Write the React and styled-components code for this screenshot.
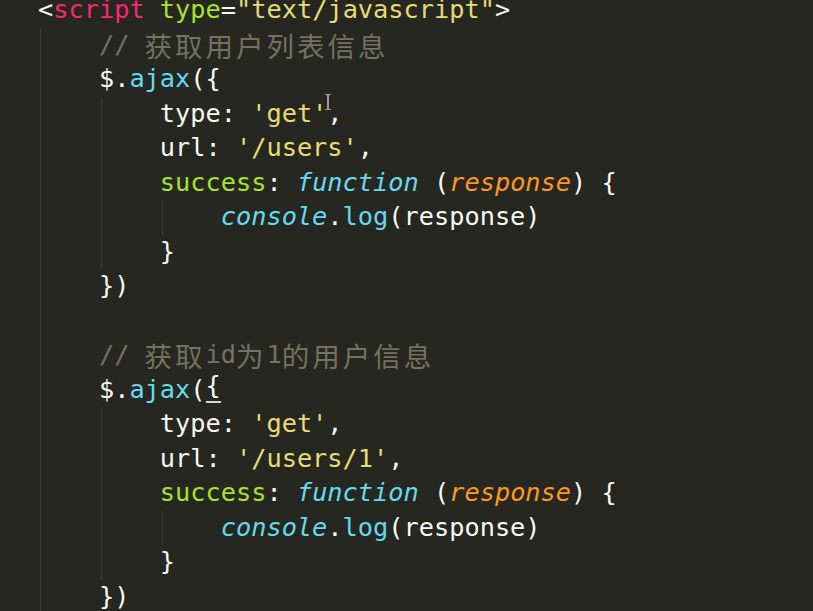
import React from "react";
import styled, { createGlobalStyle } from "styled-components";

const GlobalStyle = createGlobalStyle`
  html, body {
    margin: 0;
    padding: 0;
    background: #262721;
    overflow: hidden;
  }
`;

const Editor = styled.div`
  position: relative;
  width: 813px;
  height: 611px;
  overflow: hidden;
  background: #262721;
  font-family: "DejaVu Sans Mono", "Noto Sans CJK SC", monospace;
  font-size: 25.3px;
  color: #f8f8f2;
`;

const Code = styled.div`
  padding-left: 38px;
  margin-top: -7px;
`;

const Line = styled.div`
  display: flex;
  height: 34.5px;
  line-height: 34.5px;
  white-space: pre;
`;

const Guide = styled.span`
  display: inline-block;
  width: 4ch;
  height: 100%;
  box-sizing: border-box;
  border-left: ${(p) => (p.$on ? "1px solid #3b3c35" : "none")};
  margin-left: ${(p) => (p.$on ? "2px" : "0")};
  margin-right: ${(p) => (p.$on ? "-2px" : "0")};
`;

const Tok = styled.span`
  color: ${(p) => p.$c || "#f8f8f2"};
  font-style: ${(p) => (p.$i ? "italic" : "normal")};
`;

const Cjk = styled.span`
  font-family: "Noto Sans CJK SC", sans-serif;
  font-size: 27.5px;
  letter-spacing: 3px;
  color: #75715e;
`;

const Match = styled.span`
  border-bottom: 2px solid #d8d8d0;
  line-height: 26px;
  display: inline-block;
  height: 28px;
`;

const Cursor = styled.div`
  position: absolute;
  left: 325px;
  top: 94px;
  width: 6px;
  height: 16px;
  &::before {
    content: "";
    position: absolute;
    left: 2px;
    top: 1px;
    width: 1.5px;
    height: 14px;
    background: #9a9a94;
  }
  &::after {
    content: "";
    position: absolute;
    left: 0;
    top: 0;
    width: 6px;
    height: 16px;
    border-top: 1.5px solid #9a9a94;
    border-bottom: 1.5px solid #9a9a94;
    box-sizing: border-box;
  }
`;

const C = {
  pink: "#f92672",
  green: "#a6e22e",
  yellow: "#e6db74",
  cyan: "#66d9ef",
  orange: "#fd971f",
  comment: "#75715e",
};

function Indent({ levels }) {
  return Array.from({ length: levels }, (_, i) => <Guide key={i} $on />);
}

function Ajax({ url, matchBrace }) {
  return (
    <>
      <Line>
        <Indent levels={1} />
        <Tok>$.</Tok>
        <Tok $c={C.cyan}>ajax</Tok>
        <Tok>(</Tok>
        {matchBrace ? <Match>{"{"}</Match> : <Tok>{"{"}</Tok>}
      </Line>
      <Line>
        <Indent levels={2} />
        <Tok>type: </Tok>
        <Tok $c={C.yellow}>'get'</Tok>
        <Tok>,</Tok>
      </Line>
      <Line>
        <Indent levels={2} />
        <Tok>url: </Tok>
        <Tok $c={C.yellow}>'{url}'</Tok>
        <Tok>,</Tok>
      </Line>
      <Line>
        <Indent levels={2} />
        <Tok $c={C.green}>success</Tok>
        <Tok>: </Tok>
        <Tok $c={C.cyan} $i>
          function
        </Tok>
        <Tok> (</Tok>
        <Tok $c={C.orange} $i>
          response
        </Tok>
        <Tok>) {"{"}</Tok>
      </Line>
      <Line>
        <Indent levels={3} />
        <Tok $c={C.cyan} $i>
          console
        </Tok>
        <Tok>.</Tok>
        <Tok $c={C.cyan}>log</Tok>
        <Tok>(response)</Tok>
      </Line>
      <Line>
        <Indent levels={2} />
        <Tok>{"}"}</Tok>
      </Line>
      <Line>
        <Indent levels={1} />
        <Tok>{"})"}</Tok>
      </Line>
    </>
  );
}

export default function App() {
  return (
    <>
      <GlobalStyle />
      <Editor>
        <Code>
          <Line>
            <Tok>&lt;</Tok>
            <Tok $c={C.pink}>script</Tok>
            <Tok> </Tok>
            <Tok $c={C.green}>type</Tok>
            <Tok>=</Tok>
            <Tok $c={C.yellow}>"text/javascript"</Tok>
            <Tok>&gt;</Tok>
          </Line>
          <Line>
            <Indent levels={1} />
            <Tok $c={C.comment}>// </Tok>
            <Cjk>获取用户列表信息</Cjk>
          </Line>
          <Ajax url="/users" />
          <Line>
            <Indent levels={1} />
          </Line>
          <Line>
            <Indent levels={1} />
            <Tok $c={C.comment}>// </Tok>
            <Cjk>获取</Cjk>
            <Tok $c={C.comment}>id</Tok>
            <Cjk>为</Cjk>
            <Tok $c={C.comment}>1</Tok>
            <Cjk>的用户信息</Cjk>
          </Line>
          <Ajax url="/users/1" matchBrace />
        </Code>
        <Cursor />
      </Editor>
    </>
  );
}
